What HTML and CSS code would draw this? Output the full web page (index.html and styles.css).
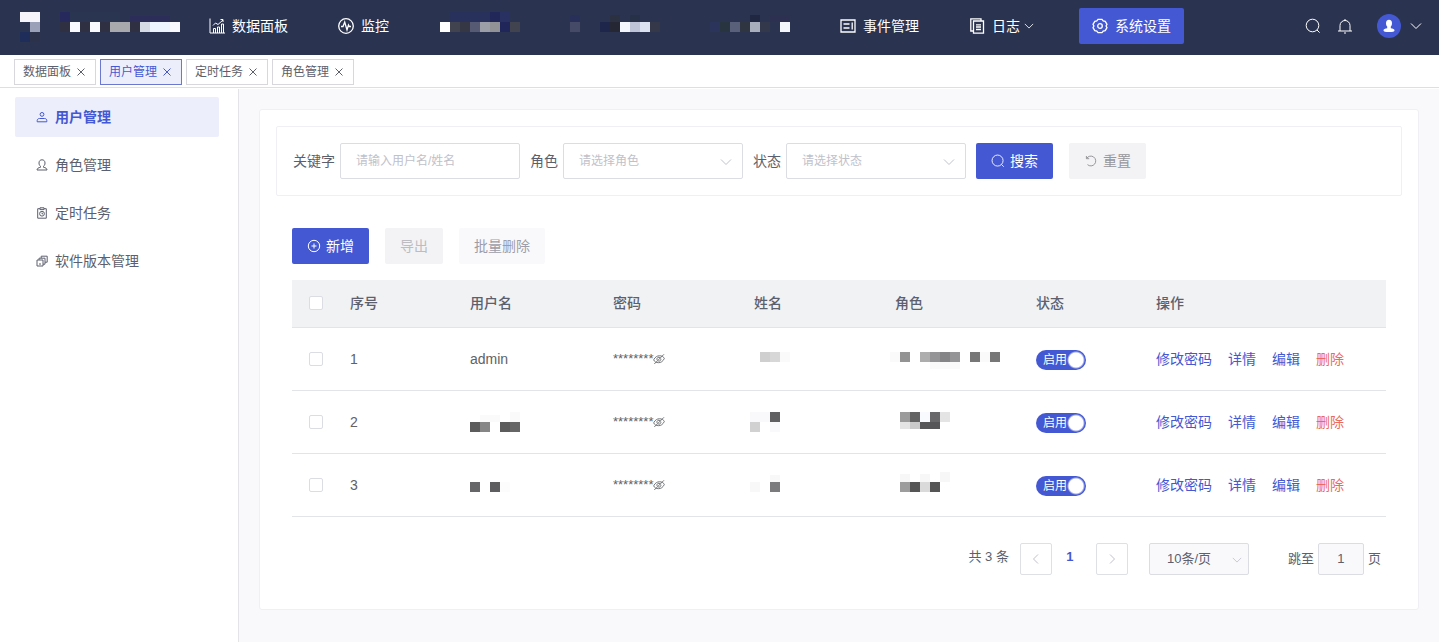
FILE: index.html
```html
<!DOCTYPE html>
<html lang="zh-CN">
<head>
<meta charset="utf-8">
<title>用户管理</title>
<link rel="stylesheet" href="styles.css">
</head>
<body>
<svg class="sprite" aria-hidden="true">
  <symbol id="i-down" viewBox="0 0 12 12"><path d="M1 3.500l5 5 5-5"/></symbol>
  <symbol id="i-close" viewBox="0 0 10 10"><path d="M1.500 1.500l7 7M8.500 1.500l-7 7"/></symbol>
  <symbol id="i-search" viewBox="0 0 16 16"><circle cx="7.500" cy="7.500" r="6.300"/><path d="M12 12l2.600 2.600"/></symbol>
  <symbol id="i-eye" viewBox="0 0 14 14"><path d="M.8 8C2.500 4.500 5 3.200 7.500 3.200c3 0 5 1.300 5.700 3.300-1.700 3.500-4.200 4.800-6.700 4.800-3 0-5-1.300-5.700-3.300z"/><path d="M5 8.500a2.200 2.200 0 0 1 3.500-2.700M9 6.500a2.200 2.200 0 0 1-3 2.800M12.800 1.500L1.500 12.800"/></symbol>
</svg>

<header class="header">
  <svg class="mosaic" width="160" height="28" aria-hidden="true">
    <path fill="#f5f4fb" d="M0 0h20v10H0z"/><path fill="#9aa0b7" d="M10 10h10v10H10z"/><path fill="#1f2d5a" d="M0 20h10v10H0z"/><path fill="#2b3249" d="M10 20h10v10H10z"/>
    <path fill="#25295c" d="M40 0h10v10H40z"/><path fill="#293551" d="M50 0h50v10H50z"/><path fill="#2d2d59" d="M110 4h40v6h-40z"/>
    <path fill="#2f3142" d="M40 10h10v10H40zM60 10h10v10H60zM80 10h10v10H80zM110 10h10v10h-10z"/>
    <path fill="#f8faff" d="M50 10h10v10H50zM70 10h10v10H70zM150 10h10v10h-10z"/><path fill="#a8a9ad" d="M90 10h20v10H90z"/><path fill="#d6dae4" d="M120 10h10v10h-10z"/><path fill="#eef4fd" d="M130 10h20v10h-20z"/>
  </svg>
  <nav class="nav">
    <a class="nav-item" href="#"><svg class="icon" width="16" height="16" viewBox="0 0 16 16"><path d="M1 .5V15h15M4.500 15v-4.500h2V15M8.500 15V9h2v6M12.500 15V6h2v9M4 7.500l2.500-2.500 2.500 1.500 5-4.500M11.500 1.500H14V4"/></svg>数据面板</a>
    <a class="nav-item" href="#"><svg class="icon bold" width="16" height="16" viewBox="0 0 16 16"><circle cx="8" cy="8" r="7.300"/><path d="M3 8.500h2l1.700-4.500 2.300 8 1.500-5 .8 1.500H13"/></svg>监控</a>
    <span class="nav-item"><svg class="mosaic" width="81" height="28" aria-hidden="true"><path fill="#28305c" d="M11 0h40v10H11z"/><path fill="#22275a" d="M51 0h10v10H51z"/><path fill="#283161" d="M61 0h10v10H61z"/><path fill="#fff" d="M1 10h10v10H1z"/><path fill="#41434f" d="M11 10h10v10H11zM71 10h10v10H71z"/><path fill="#353744" d="M21 10h10v10H21z"/><path fill="#565a72" d="M31 10h10v10H31z"/><path fill="#9b9ea6" d="M41 10h10v10H41z"/><path fill="#909296" d="M51 10h10v10H51z"/><path fill="#20265a" d="M61 10h10v10H61z"/></svg></span>
    <span class="nav-item"><svg class="mosaic" width="90" height="28" aria-hidden="true"><path fill="#28305a" d="M0 3h10v7H0z"/><path fill="#2c3142" d="M40 3h10v7H40z"/><path fill="#263046" d="M60 3h10v7H60z"/><path fill="#454b67" d="M0 10h10v10H0z"/><path fill="#1e264c" d="M30 10h10v10H30z"/><path fill="#262735" d="M40 10h10v10H40z"/><path fill="#f3f6fd" d="M50 10h10v10H50z"/><path fill="#bdc4d8" d="M60 10h10v10H60z"/><path fill="#dce1f2" d="M70 10h10v10H70z"/><path fill="#353849" d="M80 10h10v10H80z"/></svg></span>
    <span class="nav-item"><svg class="mosaic" width="80" height="28" aria-hidden="true"><path fill="#1f2840" d="M40 3h10v7H40z"/><path fill="#2d3050" d="M60 3h20v7H60z"/><path fill="#2b345a" d="M0 10h10v10H0z"/><path fill="#283541" d="M10 10h10v10H10z"/><path fill="#58607a" d="M20 10h10v10H20z"/><path fill="#303641" d="M30 10h10v10H30z"/><path fill="#a9aebd" d="M40 10h10v10H40z"/><path fill="#33384a" d="M50 10h10v10H50z"/><path fill="#f3f7fd" d="M70 10h10v10H70z"/></svg></span>
    <a class="nav-item" href="#"><svg class="icon bold" width="16" height="16" viewBox="0 0 16 16"><path d="M1 2h14v12H1zM3.500 6h6M3.500 10h6M12.200 4.500v7"/></svg>事件管理</a>
    <a class="nav-item" href="#"><svg class="icon bold" width="16" height="16" viewBox="0 0 16 16"><path d="M4.500 3h10v12.200h-10zM4.500 13H1.800V.8H12V3M7 6.800h5M7 9h5M7 11.500h5"/></svg>日志<svg class="icon nav-arrow" width="10" height="10"><use href="#i-down"/></svg></a>
    <a class="nav-item nav-active" href="#" aria-current="page"><svg class="icon bold" width="16" height="16" viewBox="0 0 16 16"><circle cx="8" cy="8" r="2.300"/><path d="M6 1.300h4l1.200 1.500 2 .5 1.800 3-.9 1.700.9 1.700-1.800 3-2 .5L10 14.700H6l-1.200-1.500-2-.5-1.800-3L1.900 8 1 6.300l1.800-3 2-.5z"/></svg>系统设置</a>
  </nav>
  <div class="tools">
    <button class="tool" aria-label="搜索"><svg class="icon" width="16" height="16"><use href="#i-search"/></svg></button>
    <button class="tool" aria-label="通知"><svg class="icon" width="16" height="16" viewBox="0 0 16 16"><path d="M1 13h14M3 13V7.500a5 5 0 0 1 10 0V13M8 2.500V1M7 15h2"/></svg></button>
    <button class="tool user" aria-label="账户">
      <span class="avatar"><svg width="12" height="14" viewBox="0 0 12 14"><path fill="#fff" d="M3 4.200C3 2 4 .8 6 .8s3 1.200 3 3.400c0 1.500-.5 2.500-1.200 3.300v1.700c2 .3 3.700.8 3.700 2.300 0 1-2 1.500-5.500 1.500S.5 12.500.5 11.500c0-1.500 1.700-2 3.700-2.300V7.500C3.500 6.700 3 5.700 3 4.200z"/></svg></span>
      <svg class="icon" width="12" height="12"><use href="#i-down"/></svg>
    </button>
  </div>
</header>

<div class="tabs">
  <div class="tab">数据面板<button class="tab-close" aria-label="关闭"><svg class="icon" width="10" height="10"><use href="#i-close"/></svg></button></div>
  <div class="tab tab-active">用户管理<button class="tab-close" aria-label="关闭"><svg class="icon" width="10" height="10"><use href="#i-close"/></svg></button></div>
  <div class="tab">定时任务<button class="tab-close" aria-label="关闭"><svg class="icon" width="10" height="10"><use href="#i-close"/></svg></button></div>
  <div class="tab">角色管理<button class="tab-close" aria-label="关闭"><svg class="icon" width="10" height="10"><use href="#i-close"/></svg></button></div>
</div>

<div class="layout">
  <aside class="side">
    <a class="side-item side-active" href="#"><svg class="icon" width="12" height="12" viewBox="0 0 12 12"><circle cx="6" cy="3.400" r="1.900"/><path d="M1.200 10.800V9.500c0-1.200 1-2 2.200-2h5.200c1.200 0 2.200.8 2.200 2v1.300z"/></svg>用户管理</a>
    <a class="side-item" href="#"><svg class="icon" width="12" height="12" viewBox="0 0 12 12"><path d="M4.500 7.300C3.500 6.500 3 5.500 3 4c0-2 1.200-3.200 3-3.200S9 2 9 4c0 1.500-.5 2.500-1.500 3.300v1c2 .4 3.500 1 3.500 2.700H1c0-1.700 1.500-2.300 3.500-2.700z"/></svg>角色管理</a>
    <a class="side-item" href="#"><svg class="icon" width="12" height="12" viewBox="0 0 12 12"><path d="M4 1.700H1.700v9.500h8.600V1.700H8M4 .8h4v1.800H4zM6 5.500v1.300h1.200"/><circle cx="6" cy="6.700" r="2.400"/></svg>定时任务</a>
    <a class="side-item" href="#"><svg class="icon" width="12" height="12" viewBox="0 0 12 12"><path d="M1 5h6v6H1zM3 5V3.200h6v6H7M5.200 3.200V1.200h6v6H9M3 9h2"/></svg>软件版本管理</a>
  </aside>

  <main class="main">
    <section class="card">
      <form class="filter">
        <div class="field"><label for="kw">关键字</label><input class="control" id="kw" type="text" placeholder="请输入用户名/姓名"></div>
        <div class="field"><label for="role">角色</label><div class="pick"><select class="control" id="role"><option>请选择角色</option></select><svg class="icon" width="12" height="12"><use href="#i-down"/></svg></div></div>
        <div class="field"><label for="state">状态</label><div class="pick"><select class="control" id="state"><option>请选择状态</option></select><svg class="icon" width="12" height="12"><use href="#i-down"/></svg></div></div>
        <div class="actions">
          <button class="btn primary" type="button"><svg class="icon" width="14" height="14"><use href="#i-search"/></svg>搜索</button>
          <button class="btn muted" type="button"><svg class="icon" width="14" height="14" viewBox="0 0 14 14"><path d="M2.600 4.500A4.900 4.900 0 1 1 3.500 10.600M2.400 2v2.700h2.800"/></svg>重置</button>
        </div>
      </form>

      <div class="content">
        <div class="actions">
          <button class="btn primary" type="button"><svg class="icon" width="14" height="14" viewBox="0 0 14 14"><circle cx="7" cy="7" r="5.700"/><path d="M7 4.500v5M4.500 7h5"/></svg>新增</button>
          <button class="btn muted faded" type="button">导出</button>
          <button class="btn light" type="button">批量删除</button>
        </div>

        <table class="table">
          <colgroup><col class="c-check"><col class="c-index"><col class="c-user"><col><col><col><col class="c-state"><col class="c-ops"></colgroup>
          <thead>
            <tr><th class="check"><input type="checkbox" aria-label="全选"></th><th>序号</th><th>用户名</th><th>密码</th><th>姓名</th><th>角色</th><th>状态</th><th>操作</th></tr>
          </thead>
          <tbody>
            <tr>
              <td class="check"><input type="checkbox" aria-label="选择 1"></td><td>1</td><td>admin</td>
              <td><span class="secret">********<button class="peek" aria-label="显示密码"><svg class="icon" width="12" height="12"><use href="#i-eye"/></svg></button></span></td>
              <td><svg class="mosaic" width="120" height="60" aria-hidden="true"><path fill="#cfcfcf" d="M6 23h10v10H6z"/><path fill="#d7d7d7" d="M16 23h10v10H16z"/><path fill="#fafafa" d="M26 23h10v10H26z"/></svg></td>
              <td><svg class="mosaic" width="120" height="60" aria-hidden="true"><path fill="#fafafa" d="M-5 23H5v10H-5zM85 23h10v10H85zM35 33h30v7H35z"/><path fill="#939393" d="M5 23h10v10H5z"/><path fill="#adadad" d="M25 23h10v10H25z"/><path fill="#959597" d="M35 23h10v10H35zM55 23h10v10H55z"/><path fill="#858587" d="M45 23h10v10H45z"/><path fill="#777" d="M75 23h10v10H75zM95 23h10v10H95z"/></svg></td>
              <td><label class="switch"><input type="checkbox" role="switch" checked><span>启用</span></label></td>
              <td><div class="ops"><a href="#">修改密码</a><a href="#">详情</a><a href="#">编辑</a><a class="danger" href="#">删除</a></div></td>
            </tr>
            <tr>
              <td class="check"><input type="checkbox" aria-label="选择 2"></td><td>2</td>
              <td><svg class="mosaic" width="120" height="60" aria-hidden="true"><path fill="#fafafa" d="M10 23h20v7H10zM40 20h10v10H40z"/><path fill="#5c5c5c" d="M0 30h10v10H0zM30 30h10v10H30z"/><path fill="#868686" d="M10 30h10v10H10z"/><path fill="#666" d="M40 30h10v10H40z"/></svg></td>
              <td><span class="secret">********<button class="peek" aria-label="显示密码"><svg class="icon" width="12" height="12"><use href="#i-eye"/></svg></button></span></td>
              <td><svg class="mosaic" width="120" height="60" aria-hidden="true"><path fill="#f9f9fb" d="M-4 20h20v10H-4zM16 30h10v10H16z"/><path fill="#606062" d="M16 20h10v10H16z"/><path fill="#d1d1d1" d="M-4 30H6v10H-4z"/></svg></td>
              <td><svg class="mosaic" width="120" height="60" aria-hidden="true"><path fill="#9b9b9b" d="M5 20h10v10H5z"/><path fill="#636363" d="M15 20h10v10H15z"/><path fill="#f9fafd" d="M25 20h10v10H25z"/><path fill="#68686a" d="M35 20h10v10H35z"/><path fill="#e4e4e4" d="M45 20h10v10H45zM5 30h10v7H5z"/><path fill="#cacaca" d="M15 30h10v7H15z"/><path fill="#565658" d="M25 30h20v7H25z"/></svg></td>
              <td><label class="switch"><input type="checkbox" role="switch" checked><span>启用</span></label></td>
              <td><div class="ops"><a href="#">修改密码</a><a href="#">详情</a><a href="#">编辑</a><a class="danger" href="#">删除</a></div></td>
            </tr>
            <tr>
              <td class="check"><input type="checkbox" aria-label="选择 3"></td><td>3</td>
              <td><svg class="mosaic" width="120" height="60" aria-hidden="true"><path fill="#666668" d="M0 27h10v10H0z"/><path fill="#5e5e60" d="M20 27h10v10H20z"/><path fill="#fcfcfc" d="M30 27h10v10H30z"/></svg></td>
              <td><span class="secret">********<button class="peek" aria-label="显示密码"><svg class="icon" width="12" height="12"><use href="#i-eye"/></svg></button></span></td>
              <td><svg class="mosaic" width="120" height="60" aria-hidden="true"><path fill="#f8f8f8" d="M-4 27H6v10H-4zM16 20h10v7H16z"/><path fill="#7b7b7d" d="M16 27h10v10H16z"/></svg></td>
              <td><svg class="mosaic" width="120" height="60" aria-hidden="true"><path fill="#f7f7f7" d="M5 19h10v8H5zM25 19h10v8H25zM45 17h10v10H45z"/><path fill="#9d9d9d" d="M5 27h10v10H5z"/><path fill="#555" d="M15 27h10v10H15zM35 27h10v10H35z"/><path fill="#dadada" d="M25 27h10v10H25z"/></svg></td>
              <td><label class="switch"><input type="checkbox" role="switch" checked><span>启用</span></label></td>
              <td><div class="ops"><a href="#">修改密码</a><a href="#">详情</a><a href="#">编辑</a><a class="danger" href="#">删除</a></div></td>
            </tr>
          </tbody>
        </table>

        <div class="pager">
          <span class="total">共 3 条</span>
          <button class="step" aria-label="上一页" disabled><svg class="icon" width="12" height="12" viewBox="0 0 12 12"><path d="M8 1.500L3.500 6 8 10.500"/></svg></button>
          <button class="page" aria-current="page">1</button>
          <button class="step" aria-label="下一页" disabled><svg class="icon" width="12" height="12" viewBox="0 0 12 12"><path d="M4 1.500L8.500 6 4 10.500"/></svg></button>
          <div class="pick size"><select class="control" aria-label="每页条数"><option>10条/页</option></select><svg class="icon" width="10" height="10"><use href="#i-down"/></svg></div>
          <label class="jump">跳至<input class="control" type="text" value="1">页</label>
        </div>
      </div>
    </section>
  </main>
</div>
</body>
</html>
```
FILE: styles.css
```css
* { box-sizing: border-box; }

body {
  margin: 0;
  min-height: 100vh;
  display: flex;
  flex-direction: column;
  background: #fff;
  color: #5c5f6e;
  font: 14px/20px "Liberation Sans", "Noto Sans CJK SC", sans-serif;
}

a { color: inherit; text-decoration: none; }
button, input, select { font: inherit; color: inherit; margin: 0; }
button { padding: 0; border: 0; background: none; cursor: pointer; }

.sprite { display: none; }
.icon { flex: none; fill: none; stroke: currentColor; stroke-width: 1; }
.icon.bold { stroke-width: 1.3; }
.mosaic { display: block; overflow: visible; shape-rendering: crispEdges; }

/* Header */
.header {
  display: flex;
  align-items: center;
  height: 55px;
  padding: 0 17px 3px 20px;
  background: #2a3350;
  color: #fff;
}
.nav { display: flex; align-items: center; gap: 20px; margin-left: 14px; white-space: nowrap; }
.nav-item { display: flex; align-items: center; gap: 7px; height: 36px; padding: 0 15px; }
.nav-arrow { margin-left: -3px; }
.nav-active { margin-left: 10px; padding: 0 13px; border-radius: 2px; background: #4458d3; }
.tools { display: flex; align-items: center; gap: 16px; margin-left: auto; }
.tool { display: flex; align-items: center; }
.user { gap: 9px; margin-left: 8px; }
.avatar { display: grid; place-items: center; width: 24px; height: 24px; border-radius: 50%; background: #4458d3; }

/* Open tabs */
.tabs { display: flex; gap: 4px; height: 33px; margin-bottom: 1px; padding: 4px 14px 0; border-bottom: 1px solid #dfdfe2; }
.tab { display: flex; align-items: center; gap: 5px; height: 26px; padding: 0 9px 0 8px; border: 1px solid #d8d8dc; font-size: 12px; }
.tab-active { border-color: #6a78cf; background: #eceefb; color: #4458d3; }
.tab-close { display: flex; }

/* Layout */
.layout { display: flex; flex: 1; }
.side { display: flex; flex-direction: column; gap: 8px; flex: 0 0 239px; padding: 8px 19px 0 15px; border-right: 1px solid #e3e3e8; }
.side-item { display: flex; align-items: center; gap: 7px; height: 40px; padding-left: 21px; border-radius: 2px; }
.side-active { background: #eceefb; color: #4458d3; font-weight: 700; }
.main { flex: 1; min-width: 0; padding: 20px 20px 32px; background: #f9f9fc; }
.card { padding: 16px 16px 34px; border: 1px solid #f0f0f4; border-radius: 3px; background: #fff; }

/* Filter form */
.filter { display: flex; align-items: center; gap: 10px; padding: 16px; border: 1px solid #f0f0f4; border-radius: 2px; }
.field { display: flex; align-items: center; gap: 5px; }
.control {
  width: 180px;
  height: 36px;
  padding: 0 15px;
  border: 1px solid #dcdde4;
  border-radius: 2px;
  background: #fff;
  appearance: none;
  outline: none;
}
.filter .control { font-size: 12px; color: #bfc1ca; }
.control::placeholder { color: #bfc1ca; }
.pick { position: relative; color: #c0c2cb; }
.pick .icon { position: absolute; top: 50%; right: 11px; margin-top: -5px; pointer-events: none; }
.actions { display: flex; gap: 16px; }
.btn { display: flex; align-items: center; gap: 5px; height: 36px; padding: 0 15px; border-radius: 2px; }
.primary { background: #4458d3; color: #fff; }
.muted { background: #f3f3f5; color: #97979c; }
.faded { color: #bcbcc2; }
.light { background: #f9f9fc; color: #9c9da8; }

/* Table */
.content { padding: 32px 16px 0; }
.table { width: 100%; margin-top: 16px; border-collapse: collapse; table-layout: fixed; }
.c-check { width: 48px; }
.c-index, .c-state { width: 120px; }
.c-user { width: 143px; }
.c-ops { width: 240px; }
.table th, .table td { padding: 0 10px; border-bottom: 1px solid #e3e4e8; text-align: left; vertical-align: middle; white-space: nowrap; }
.table th { height: 47px; background: #f1f2f4; font-weight: 500; }
.table td { height: 63px; color: #606266; }
.table .check { padding: 0 0 0 17px; }
.check input { display: block; width: 14px; height: 14px; border: 1px solid #dcdde4; border-radius: 2px; background: #fff; appearance: none; }
.secret { display: flex; align-items: center; font-size: 13px; }
.peek { display: flex; }
.switch { position: relative; display: block; width: 50px; height: 20px; margin-top: 2px; }
.switch input { display: block; width: 50px; height: 20px; border-radius: 10px; background: radial-gradient(circle at 40px 10px, #fff 7px, #4458d3 9px); appearance: none; }
.switch span { position: absolute; top: 0; left: 7px; color: #fff; font-size: 12px; }
.table .ops { display: flex; gap: 16px; color: #4458d3; }
.ops .danger { color: #ea6a62; }

/* Pagination */
.pager { display: flex; justify-content: flex-end; margin-top: 26px; padding-right: 5px; font-size: 13px; line-height: 28px; }
.total { margin-right: 11px; }
.step { display: grid; place-items: center; width: 32px; height: 32px; border: 1px solid #dfe0e6; border-radius: 2px; color: #c0c2cb; }
.page { width: 36px; height: 28px; margin-right: 8px; color: #4458d3; font-weight: 700; }
.size { margin-left: 21px; }
.size .control { width: 100px; height: 32px; padding-left: 17px; background: #f9f9fb; color: #5c5f6e; }
.size .icon { right: 7px; margin-top: -4px; }
.jump { display: flex; align-items: center; gap: 4px; height: 32px; margin-left: 39px; }
.jump .control { width: 46px; height: 32px; padding: 0; background: #f9f9fb; text-align: center; }
```
